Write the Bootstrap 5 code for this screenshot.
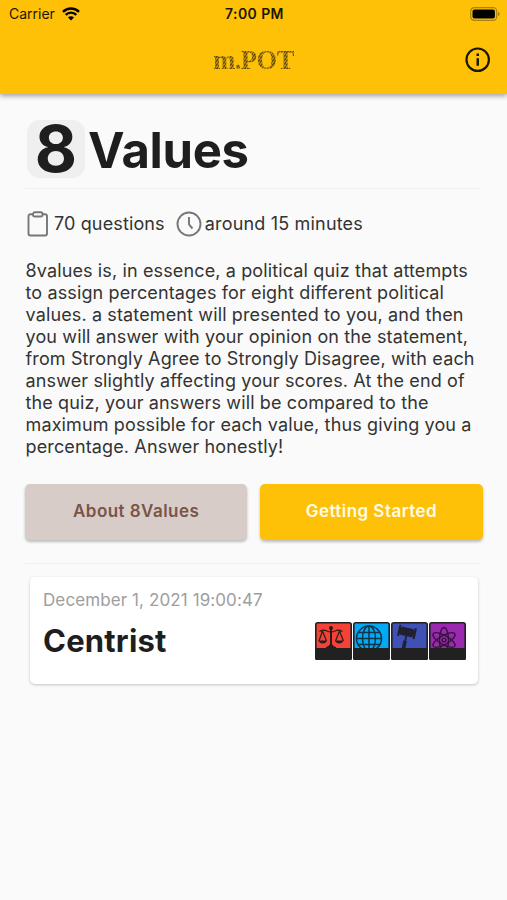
<!DOCTYPE html>
<html lang="en">
<head>
<meta charset="utf-8">
<meta name="viewport" content="width=device-width, initial-scale=1">
<title>m.POT</title>
<link href="https://cdn.jsdelivr.net/npm/bootstrap@5.3.0/dist/css/bootstrap.min.css" rel="stylesheet">
<style>
body{font-family:Inter,"Liberation Sans",sans-serif;background:#fafafa;color:#333;min-height:900px;overflow:hidden}
svg{display:block;flex:none}
.top-area{background:#ffc107;height:94px;box-shadow:0 2px 5px rgba(0,0,0,.36);color:#1c1600}
.status-line{height:27px;padding:0 7px 0 9px;font-size:14px;line-height:27px}
.status-line>div{flex:1 1 0}
.status-line .signal{margin-left:7px}
.clock-text{font-weight:600;font-size:14px;letter-spacing:.4px}
.title-line{height:65px;padding:0 16px}
.title-line>div{flex:1 1 0}
.brand-text{font-family:"Liberation Serif",serif;font-weight:700;font-size:26.5px;line-height:30px;letter-spacing:-.5px;color:transparent;background:repeating-linear-gradient(125deg,#6b5409 0 1.2px,#b78c0a 1.2px 2.3px);-webkit-background-clip:text;background-clip:text}
.page-body{padding:26px 25px 0}
.headline{height:58px}
.eight-box{width:58px;height:58px;margin-left:2px;border-radius:13px;background:#efefef;font-size:65px;font-weight:700;line-height:58px;color:#1e1e1e}
.headline-text{font-size:49px;font-weight:700;line-height:62px;color:#1e1e1e;margin-left:3px;letter-spacing:-.3px}
.rule-line{height:1px;background:#eee;margin-right:2px}
.rule-top{margin-top:10px}
.rule-mid{margin-top:23px}
.facts{height:28px;margin-top:21px;font-size:18px;line-height:28px;letter-spacing:.13px}
.clock-icon{margin-left:9px}
.duration{margin-left:3px;letter-spacing:.18px}
.intro{font-size:18px;line-height:22px;margin:22px 0 0;white-space:nowrap;letter-spacing:.13px;padding-left:.5px}
.action-row{gap:13px;margin-top:26px;margin-right:-.5px}
.action-row .btn{flex:1 1 0;height:56px;border:0;border-radius:5px;font-size:17px;font-weight:600;line-height:22px;padding-bottom:8px;letter-spacing:.45px;box-shadow:0 2px 3px rgba(0,0,0,.25)}
.btn-about,.btn-about:hover{background:#d7ccc8;color:#795548}
.btn-start,.btn-start:hover{background:#ffc107;color:#fffbe8}
.result-card{margin:13px 4px 0 5px;height:107px;border-radius:5px;background:#fff;box-shadow:0 1px 3px rgba(0,0,0,.22);padding:12px 12px 0 13px}
.date-text{font-size:17px;line-height:22px;color:#9e9e9e;letter-spacing:.1px}
.result-line{margin-top:11px}
.result-name{font-size:31px;font-weight:700;line-height:38px;color:#1e1e1e;letter-spacing:.2px}
.tile-set{gap:1px}
</style>
</head>
<body>
<header class="top-area">
  <div class="status-line d-flex">
    <div class="d-flex align-items-center"><span>Carrier</span>
      <svg class="signal" width="18" height="14" viewBox="0 0 18 14" fill="none" stroke="#000" stroke-width="2.4"><path d="M1 4.8a11.400 11.400 0 0 1 16 0M3.700 7.800a7.500 7.500 0 0 1 10.600 0"/><path d="M9 13.400 6 10.400a4.200 4.200 0 0 1 6 0z" fill="#000" stroke="none"/></svg>
    </div>
    <span class="clock-text">7:00 PM</span>
    <div class="d-flex align-items-center justify-content-end">
      <svg width="30" height="14" viewBox="0 0 30 14"><rect x=".7" y=".7" width="26" height="12.600" rx="3.600" fill="none" stroke="#a9820a" stroke-width="1.200"/><rect x="2.500" y="2.400" width="22.400" height="9.200" rx="2" fill="#000"/><path d="M28 4.800q1.700.8 1.700 2.200T28 9.200z" fill="#a9820a"/></svg>
    </div>
  </div>
  <div class="title-line d-flex align-items-center">
    <div></div><span class="brand-text">m.POT</span>
    <div class="d-flex justify-content-end"><svg width="26" height="26" viewBox="0 0 26 26"><circle cx="12.700" cy="12.700" r="11.200" fill="none" stroke="#1c1600" stroke-width="2.200"/><path d="M11.500 6.500h2.500v2.500h-2.500zM11.500 11.300h2.500v7.400h-2.500z" fill="#1c1600"/></svg></div>
  </div>
</header>
<main class="page-body">
  <div class="headline d-flex"><div class="eight-box text-center">8</div><h1 class="headline-text mb-0">Values</h1></div>
  <div class="rule-line rule-top"></div>
  <div class="facts d-flex align-items-center">
    <svg width="25" height="26" viewBox="0 0 25 26" fill="none" stroke="#777" stroke-width="1.900"><path d="M8 3.200H5.500a2 2 0 0 0-2 2V22.500a2 2 0 0 0 2 2h14.500a2 2 0 0 0 2-2V5.200a2 2 0 0 0-2-2H17.500"/><rect x="8" y="1.300" width="9.500" height="4.200" rx="1.800"/></svg>
    <span class="ms-1">70 questions</span>
    <svg class="clock-icon" width="28" height="26" viewBox="0 0 28 26" fill="none" stroke="#777" stroke-width="1.900"><circle cx="15" cy="13" r="11.500"/><path d="M15 6v7.500l3.500 4"/></svg>
    <span class="duration">around 15 minutes</span>
  </div>
  <p class="intro">8values is, in essence, a political quiz that attempts<br>to assign percentages for eight different political<br>values. a statement will presented to you, and then<br>you will answer with your opinion on the statement,<br>from Strongly Agree to Strongly Disagree, with each<br>answer slightly affecting your scores. At the end of<br>the quiz, your answers will be compared to the<br>maximum possible for each value, thus giving you a<br>percentage. Answer honestly!</p>
  <div class="action-row d-flex">
    <button class="btn btn-about" type="button">About 8Values</button>
    <button class="btn btn-start" type="button">Getting Started</button>
  </div>
  <div class="rule-line rule-mid"></div>
  <section class="result-card">
    <div class="date-text">December 1, 2021 19:00:47</div>
    <div class="result-line d-flex justify-content-between align-items-center">
      <h2 class="result-name mb-0">Centrist</h2>
      <div class="tile-set d-flex">
        <svg width="37" height="38" viewBox="0 0 37 38"><rect x=".8" y=".8" width="35.400" height="36.400" rx="2" fill="#f44336" stroke="#212121" stroke-width="1.600"/><g fill="none" stroke="#2b1c1b" stroke-width="1.200"><path d="M4.500 9.500q4-2.500 7.500-.5 4 2 8 0 3.500-2 7.500.5M7.500 9 4 19M7.500 9l4 10M24.500 9l-4 10M24.500 9l4 10"/><path d="M16 5v20" stroke-width="2"/></g><g fill="#2b1c1b"><circle cx="16" cy="6" r="2"/><path d="M3.500 18.500h8.500q-1 3-4.250 3T3.500 18.500zM20 18.500h8.500q-1 3-4.250 3T20 18.500zM10.500 27q0-2.500 3-3 1-2 2.500-2t2.500 2q3 .5 3 3z"/></g><path d="M0 26h37v10.500a1.500 1.500 0 0 1-1.500 1.500h-34A1.500 1.500 0 0 1 0 36.500z" fill="#212121"/></svg>
        <svg width="37" height="38" viewBox="0 0 37 38"><rect x=".8" y=".8" width="35.400" height="36.400" rx="2" fill="#03a9f4" stroke="#212121" stroke-width="1.600"/><g fill="none" stroke="#123448" stroke-width="1.500"><circle cx="16" cy="16.500" r="12.500"/><ellipse cx="16" cy="16.500" rx="6.500" ry="12.500"/><path d="M16 4v24.600M3.700 16.500h24.600M5 10.500h22M5 22.500h22"/></g><path d="M0 26h37v10.500a1.500 1.500 0 0 1-1.500 1.500h-34A1.500 1.500 0 0 1 0 36.500z" fill="#212121"/></svg>
        <svg width="37" height="38" viewBox="0 0 37 38"><rect x=".8" y=".8" width="35.400" height="36.400" rx="2" fill="#3f51b5" stroke="#212121" stroke-width="1.600"/><g transform="rotate(12 16 10)" fill="#20212f"><rect x="9.800" y="5.800" width="12.400" height="8.400"/><rect x="7" y="4.200" width="2.200" height="11.600" rx="1"/><rect x="22.800" y="4.200" width="2.200" height="11.600" rx="1"/><path d="M8 7h16v6H8zM15.200 14h1.800v5h.8v10h-3.600V19h1z"/></g><path d="M0 26h37v10.500a1.500 1.500 0 0 1-1.500 1.500h-34A1.500 1.500 0 0 1 0 36.500z" fill="#212121"/></svg>
        <svg width="37" height="38" viewBox="0 0 37 38"><rect x=".8" y=".8" width="35.400" height="36.400" rx="2" fill="#9c27b0" stroke="#212121" stroke-width="1.600"/><g fill="none" stroke="#321838" stroke-width="1.400"><ellipse cx="15" cy="18" rx="4.500" ry="12.500"/><ellipse cx="15" cy="18" rx="4.500" ry="12.500" transform="rotate(60 15 18)"/><ellipse cx="15" cy="18" rx="4.500" ry="12.500" transform="rotate(120 15 18)"/><circle cx="15" cy="18" r="1.900"/></g><path d="M0 26h37v10.500a1.500 1.500 0 0 1-1.500 1.500h-34A1.500 1.500 0 0 1 0 36.500z" fill="#212121"/></svg>
      </div>
    </div>
  </section>
</main>
</body>
</html>
